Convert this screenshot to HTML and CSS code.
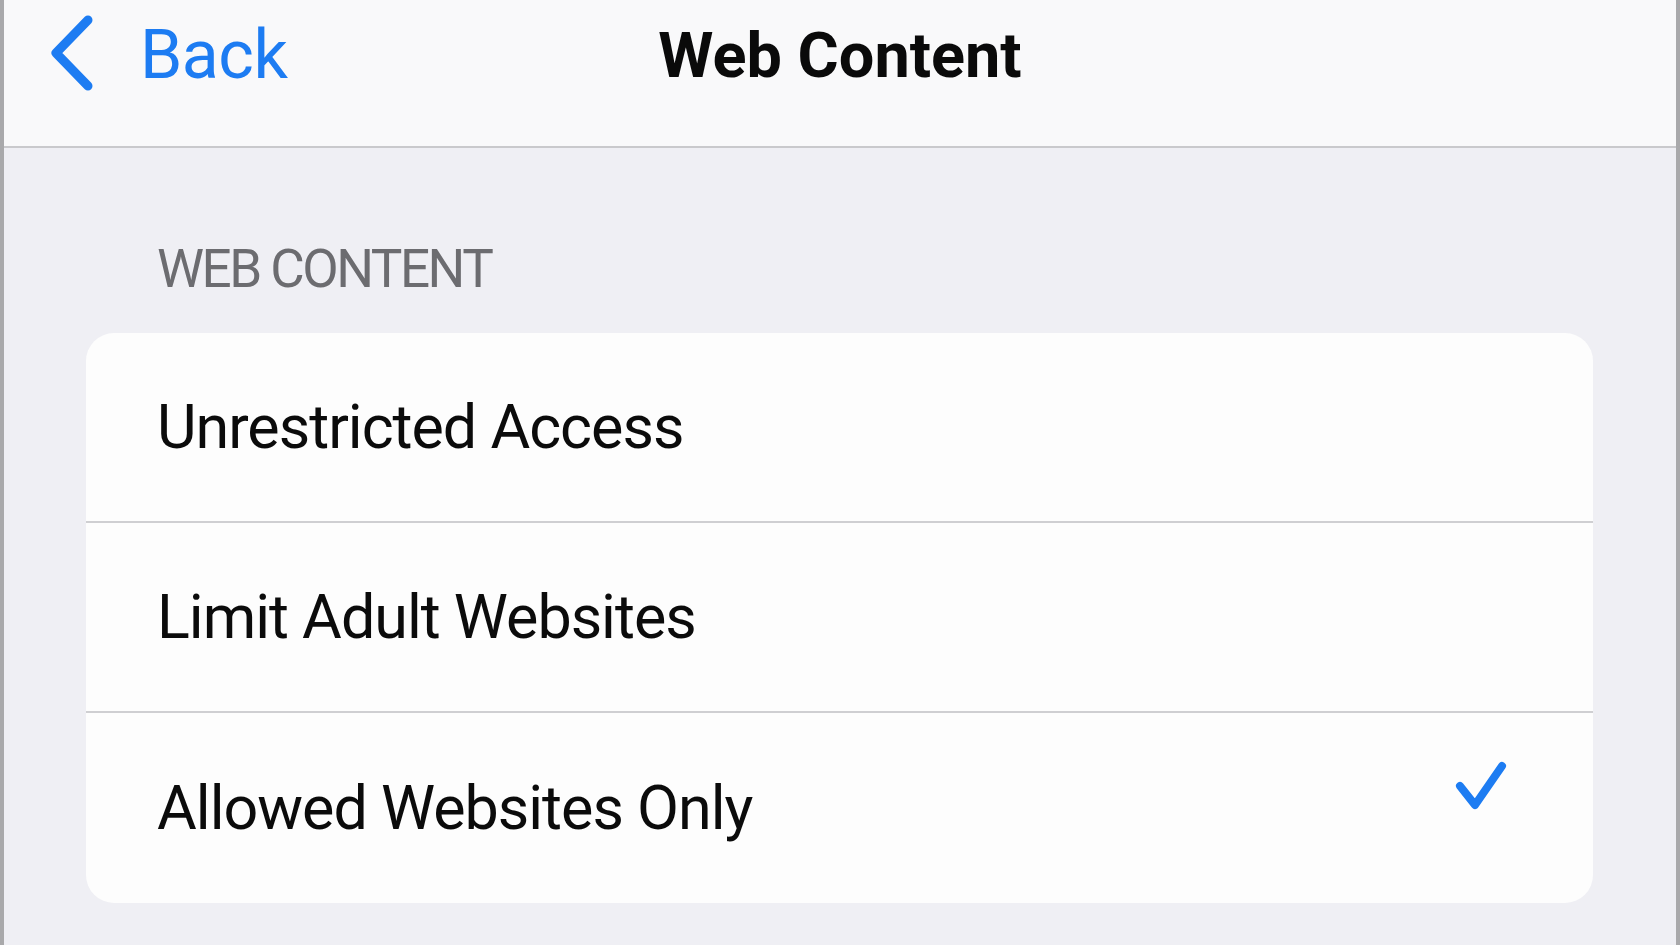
FILE: index.html
```html
<!DOCTYPE html>
<html lang="en">
<head>
    <meta charset="UTF-8">
    <meta name="viewport" content="width=device-width, initial-scale=1.0">
    <title>Web Content</title>
    <link rel="stylesheet" href="styles.css">
</head>
<body>
    <div class="screen">
        <header class="nav">
            <a class="back" href="#">
                <svg class="chevron" width="50" height="80" viewBox="0 0 50 80">
                    <polyline points="38,7 6,40 38,73" fill="none" stroke="#1d7cf2" stroke-width="9" stroke-linecap="round" stroke-linejoin="round"/>
                </svg>
                <span>Back</span>
            </a>
            <h1 class="title">Web Content</h1>
            <div></div>
        </header>

        <main class="content">
            <h2 class="section-title">WEB CONTENT</h2>
            <div class="card">
                <div class="row">Unrestricted Access</div>
                <div class="row">Limit Adult Websites</div>
                <div class="row selected">
                    <span>Allowed Websites Only</span>
                    <svg class="check" width="56" height="56" viewBox="0 0 56 56">
                        <polyline points="6,26 21,45 48,6" fill="none" stroke="#1d7cf2" stroke-width="8" stroke-linecap="round" stroke-linejoin="round"/>
                    </svg>
                </div>
            </div>
            <p class="footer">Limit access to allowed websites only.</p>
        </main>
    </div>
</body>
</html>
```

FILE: styles.css
```css
*{
    margin: 0;
    padding: 0;
    box-sizing: border-box;
}

body{
    background-color: #efeff4;
    font-family: Roboto, "Liberation Sans", sans-serif;
    overflow: hidden;
}

.screen{
    height: 945px;
    border-left: 4px solid #a9a9ab;
    border-right: 4px solid #a9a9ab;
    overflow: hidden;
}

/* top bar */
.nav{
    height: 148px;
    background-color: #f9f9fa;
    border-bottom: 2px solid #c9c9cc;
    display: grid;
    grid-template-columns: 1fr auto 1fr;
    align-items: center;
    padding-bottom: 40px;
}

.back{
    display: flex;
    align-items: center;
    gap: 40px;
    padding-left: 46px;
    color: #1d7cf2;
    text-decoration: none;
    font-size: 68px;
    letter-spacing: -0.5px;
}

.back span{
    margin-top: 4px;
}

.title{
    font-size: 63px;
    font-weight: 700;
    color: #0a0a0a;
    letter-spacing: 0;
    padding-top: 4px;
}

/* list */
.content{
    padding: 0 83px 0 82px;
}

.section-title{
    font-weight: 400;
    font-size: 53px;
    color: #6c6c70;
    padding: 90px 0 0 71px;
    height: 185px;
    letter-spacing: -2.5px;
}

.card{
    background-color: #fdfdfd;
    border-radius: 28px;
    overflow: hidden;
}

.row{
    height: 190px;
    display: flex;
    align-items: center;
    justify-content: space-between;
    padding: 0 83px 0 71px;
    font-size: 61px;
    color: #0b0b0b;
    letter-spacing: -1px;
    border-bottom: 2px solid #cfcfd2;
}

.row:last-child{
    border-bottom: none;
}

.check{
    margin-top: -40px;
}

.footer{
    padding: 32px 0 0 71px;
    font-size: 56px;
    color: #a2a2a6;
}
```
